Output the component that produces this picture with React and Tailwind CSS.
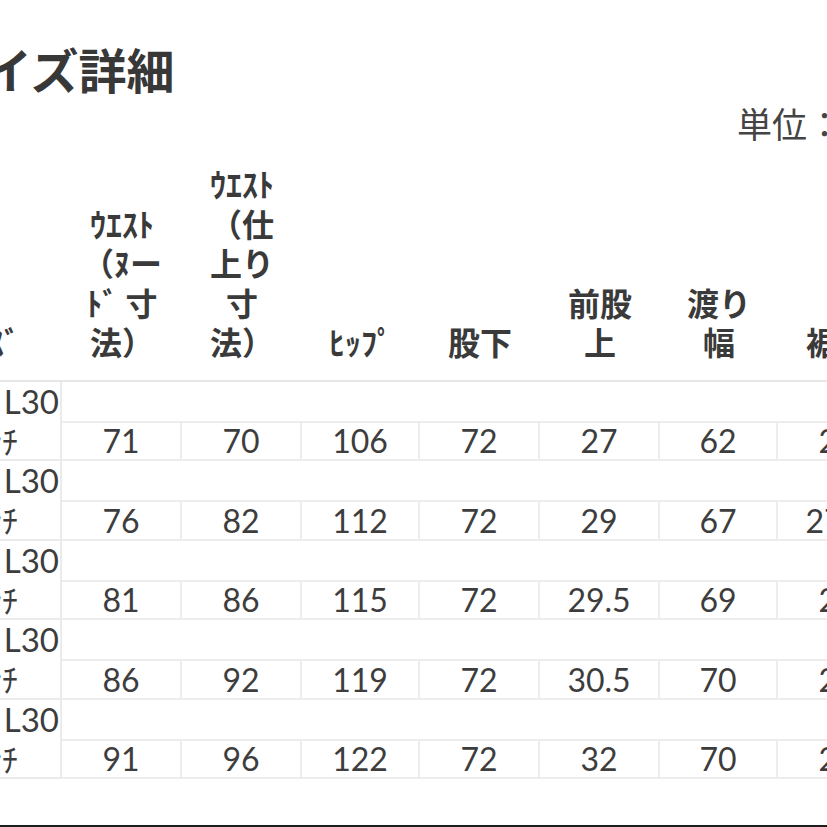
const jp = { fontFamily: '"Noto Sans CJK JP", "Noto Sans", sans-serif' };

const headers = [
  ['ｳｴｽﾄ', '（ﾇー', 'ﾄﾞ 寸', '法）'],
  ['ｳｴｽﾄ', '（仕', '上り', '寸', '法）'],
  ['ﾋｯﾌﾟ'],
  ['股下'],
  ['前股', '上'],
  ['渡り', '幅'],
  ['裾幅'],
];

const rows = [
  { size: ['W28 L30', '28ｲﾝﾁ'], values: ['71', '70', '106', '72', '27', '62', '26'] },
  { size: ['W30 L30', '30ｲﾝﾁ'], values: ['76', '82', '112', '72', '29', '67', '27.5'] },
  { size: ['W32 L30', '32ｲﾝﾁ'], values: ['81', '86', '115', '72', '29.5', '69', '28'] },
  { size: ['W34 L30', '34ｲﾝﾁ'], values: ['86', '92', '119', '72', '30.5', '70', '29'] },
  { size: ['W36 L30', '36ｲﾝﾁ'], values: ['91', '96', '122', '72', '32', '70', '29'] },
];

const cols = 'grid grid-cols-[120px_120px_120px_118px_120px_120px_118px_120px]';

function DataRow({ row }) {
  return (
    <div className={`${cols} h-[79.5px]`}>
      <div className="flex flex-col items-end border-r-2 border-b-2 border-[#ebebeb] text-[33px] leading-none text-[#3d3d3d] font-['Lato']">
        <div className="h-[39px] flex items-center pr-[1px] whitespace-nowrap">{row.size[0]}</div>
        <div className="h-[38px] flex items-center pr-[42px] whitespace-nowrap text-[32px] leading-none" style={jp}>
          {row.size[1]}
        </div>
      </div>
      {row.values.map((v, i) => (
        <div key={i} className="flex flex-col">
          <div className="h-[39px]" />
          <div className="flex-1 flex items-center justify-center pt-[1px] border-t-2 border-b-2 border-r-2 border-[#ededed] text-[32px] leading-none text-[#3d3d3d] font-['Lato'] whitespace-nowrap">
            {v}
          </div>
        </div>
      ))}
    </div>
  );
}

export default function App() {
  return (
    <div className="w-[827px] h-[827px] bg-white overflow-hidden flex flex-col text-[#3a3a3a]">
      <div
        className="mt-[44px] -ml-[64px] text-[48px] leading-[48px] font-bold whitespace-nowrap text-[#383838]"
        style={jp}
      >
        サイズ詳細
      </div>
      <div
        className="mt-[13px] pl-[737px] text-[35px] leading-[35px] whitespace-nowrap text-[#444]"
        style={jp}
      >
        単位：cm
      </div>

      <div className="-ml-[58px] mt-[24px] w-max">
        <div
          className={`${cols} items-end pb-[18px] border-b-2 border-[#e6e6e6] text-[32px] leading-[39.5px] font-bold text-[#3a3a3a]`}
          style={jp}
        >
          <div className="text-right pr-[42px]">ｻｲｽﾞ</div>
          {headers.map((lines, i) => (
            <div key={i} className="flex flex-col items-center">
              {lines.map((l, j) => (
                <div key={j} className="whitespace-pre">
                  {l}
                </div>
              ))}
            </div>
          ))}
        </div>
        {rows.map((r, i) => (
          <DataRow key={i} row={r} />
        ))}
      </div>

      <div className="flex-1" />
      <div className="h-[2px] bg-[#1c1c1c]" />
    </div>
  );
}
